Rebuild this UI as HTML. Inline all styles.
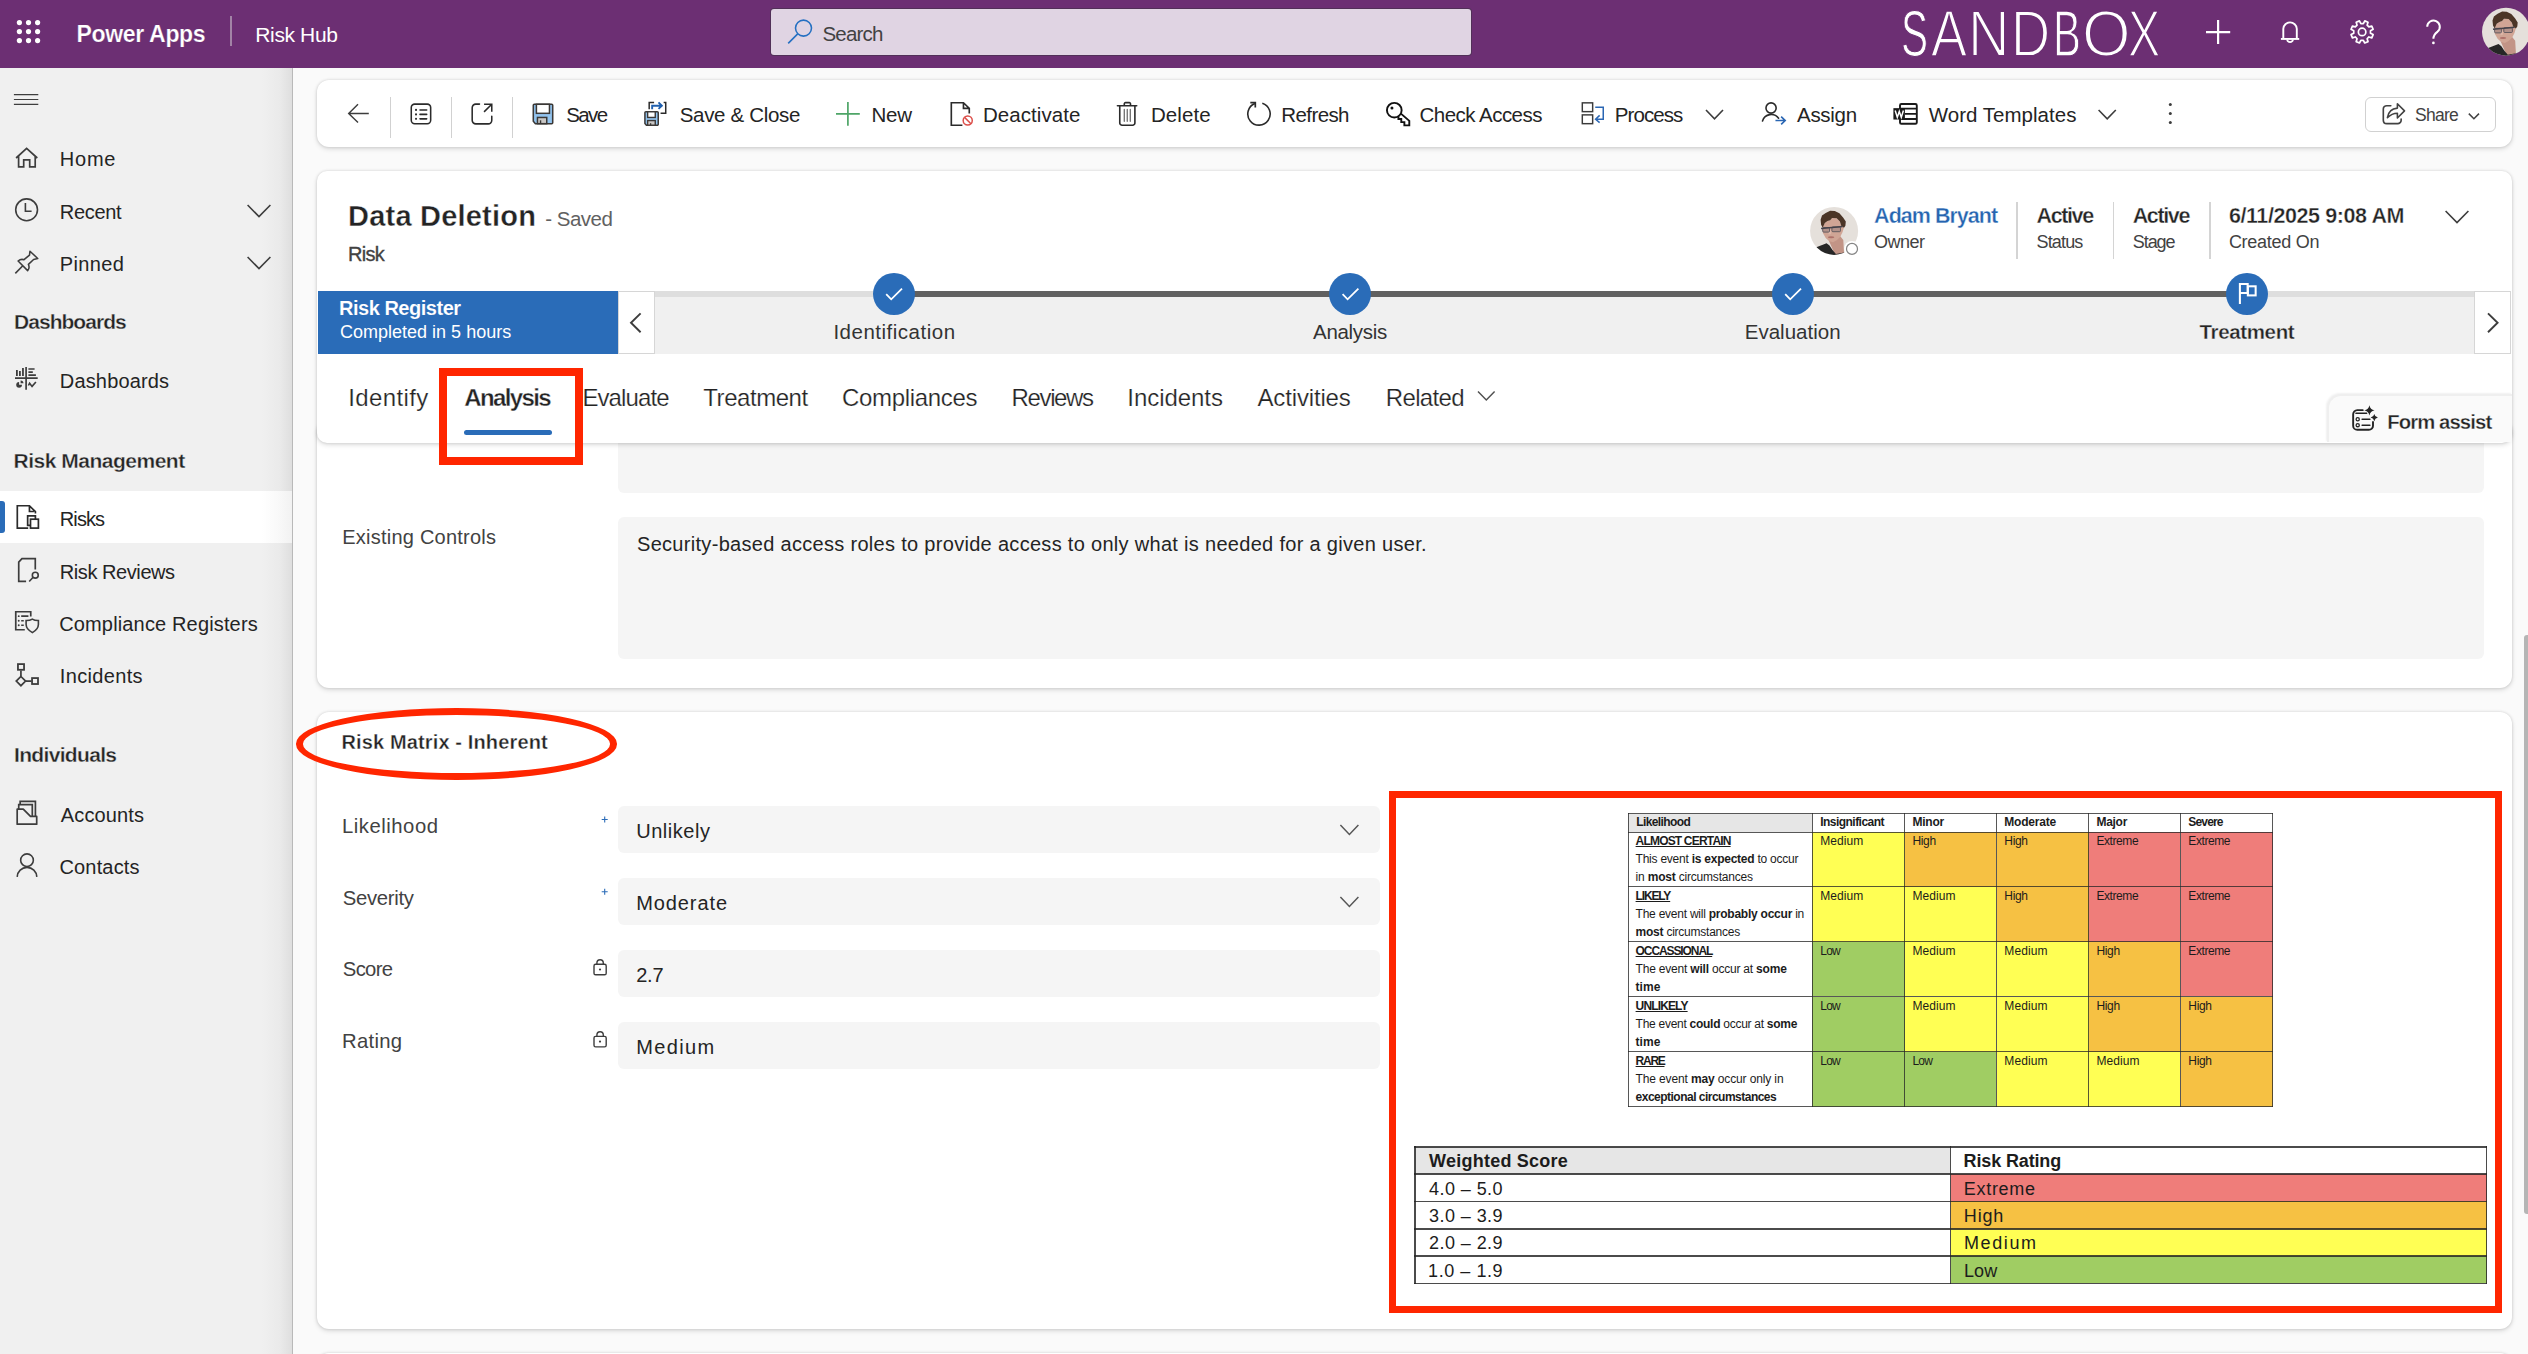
<!DOCTYPE html>
<html><head><meta charset="utf-8"><title>Risk: Data Deletion - Power Apps</title>
<style>
*{box-sizing:border-box;margin:0;padding:0}
html,body{width:2528px;height:1354px;overflow:hidden;background:#fafafa;font-family:"Liberation Sans",sans-serif}
#r{position:absolute;left:0;top:0;width:2528px;height:1354px;overflow:hidden;background:#fafafa}
.a{position:absolute}
.t{position:absolute;white-space:pre;line-height:0}
.card{position:absolute;background:#fff;border-radius:12px;box-shadow:0 0 3px rgba(0,0,0,.14),0 2px 5px rgba(0,0,0,.13)}
.fld{position:absolute;background:#f5f5f5;border-radius:6px}
svg{position:absolute;overflow:visible}
</style></head><body><div id="r">
<div class="card" style="left:317px;top:420px;width:2195px;height:268px"></div>
<div class="card" style="left:317px;top:712px;width:2195px;height:617px"></div>
<div class="card" style="left:317px;top:1353px;width:2195px;height:100px"></div>
<div class="fld" style="left:618px;top:430px;width:1866px;height:62.5px"></div>
<div class="fld" style="left:618px;top:517px;width:1866px;height:142.3px"></div>
<div class="fld" style="left:618px;top:806px;width:762px;height:46.89999999999998px"></div>
<div class="fld" style="left:618px;top:878.2px;width:762px;height:46.89999999999998px"></div>
<div class="fld" style="left:618px;top:950.1px;width:762px;height:47.299999999999955px"></div>
<div class="fld" style="left:618px;top:1022px;width:762px;height:47.40000000000009px"></div>
<div class="card" style="left:317px;top:171px;width:2195px;height:271.5px;border-radius:10px"></div>
<div class="a" style="left:2326.8px;top:394.2px;width:185px;height:48.2px;background:#fafafa;border-top-left-radius:14px;border:2.2px solid #efefef;border-right:none;border-bottom:none;box-shadow:-1px -1px 2px rgba(0,0,0,.06)"></div>
<div class="a" style="left:654px;top:291.3px;width:1821px;height:62.4px;background:#f0f0f0"></div>
<div class="a" style="left:654px;top:291.3px;width:1821px;height:5.8px;background:#dedede"></div>
<div class="a" style="left:893px;top:291.3px;width:1354px;height:5.8px;background:#616161"></div>
<div class="a" style="left:318.2px;top:291.3px;width:300px;height:62.3px;background:#2a6cb8"></div>
<div class="a" style="left:618px;top:291.3px;width:36.5px;height:62.3px;background:#fff;border:1px solid #d6d6d6"></div>
<div class="a" style="left:2474.3px;top:291.3px;width:36.5px;height:62.3px;background:#fff;border:1px solid #d6d6d6"></div>
<div class="a" style="left:872.8499999999999px;top:273.05px;width:41.9px;height:41.9px;border-radius:50%;background:#2a6cb8"></div>
<div class="a" style="left:1329.25px;top:273.05px;width:41.9px;height:41.9px;border-radius:50%;background:#2a6cb8"></div>
<div class="a" style="left:1771.85px;top:273.05px;width:41.9px;height:41.9px;border-radius:50%;background:#2a6cb8"></div>
<div class="a" style="left:2226.1000000000004px;top:273.05px;width:41.9px;height:41.9px;border-radius:50%;background:#2a6cb8"></div>
<div class="a" style="left:2016.4px;top:202px;width:1.6px;height:57px;background:#d4d4d4"></div>
<div class="a" style="left:2112.9px;top:202px;width:1.6px;height:57px;background:#d4d4d4"></div>
<div class="a" style="left:2209px;top:202px;width:1.6px;height:57px;background:#d4d4d4"></div>
<div class="a" style="left:464.3px;top:429.8px;width:87.5px;height:5.5px;border-radius:3px;background:#2a6cb8"></div>
<div class="card" style="left:317px;top:80px;width:2195px;height:67px"></div>
<div class="a" style="left:390px;top:96.5px;width:1.3px;height:41px;background:#d1d1d1"></div>
<div class="a" style="left:451px;top:96.5px;width:1.3px;height:41px;background:#d1d1d1"></div>
<div class="a" style="left:512px;top:96.5px;width:1.3px;height:41px;background:#d1d1d1"></div>
<div class="a" style="left:2365.3px;top:97px;width:130.4px;height:34.8px;border:1.3px solid #d1d1d1;border-radius:6px;background:#fff"></div>
<div class="a" style="left:0;top:68px;width:292.5px;height:1286px;background:linear-gradient(90deg,#f0f0f0 0,#f0f0f0 262px,#eaeaea 280px,#dfdfdf 291.5px);border-right:1.3px solid #b9b9b9"></div>
<div class="a" style="left:0;top:491px;width:291.5px;height:51.7px;background:linear-gradient(90deg,#fff 0,#fff 262px,#f9f9f9 278px,#f2f2f2 291.5px)"></div>
<div class="a" style="left:0;top:501px;width:4.6px;height:32px;background:#2a6cb8;border-radius:0 3px 3px 0"></div>
<div class="a" style="left:0;top:0;width:2528px;height:68px;background:#6c2f73"></div>
<div class="a" style="left:230.3px;top:16px;width:1.5px;height:30px;background:#a283a6"></div>
<div class="a" style="left:771.1px;top:8.9px;width:700px;height:46px;background:#e0d4e3;border-radius:3px;box-shadow:0 0 0 1px rgba(60,50,65,.55)"></div>
<div class="a" style="left:2524px;top:634.9px;width:6px;height:578.8px;background:#b5b5b5;border-radius:3.5px"></div>
<div class="a" style="left:1628.4px;top:813.6px;width:644.2999999999997px;height:292.9px;background:#fff"></div>
<div class="a" style="left:1628.4px;top:813.6px;width:184.0px;height:18.600000000000023px;background:#e6e6e6"></div>
<div class="a" style="left:1812.4px;top:832.2px;width:92.19999999999982px;height:54.69999999999993px;background:#ffff54"></div>
<div class="a" style="left:1904.6px;top:832.2px;width:91.90000000000009px;height:54.69999999999993px;background:#f6c143"></div>
<div class="a" style="left:1996.5px;top:832.2px;width:92.09999999999991px;height:54.69999999999993px;background:#f6c143"></div>
<div class="a" style="left:2088.6px;top:832.2px;width:91.90000000000009px;height:54.69999999999993px;background:#ef7d7a"></div>
<div class="a" style="left:2180.5px;top:832.2px;width:92.19999999999982px;height:54.69999999999993px;background:#ef7d7a"></div>
<div class="a" style="left:1812.4px;top:886.9px;width:92.19999999999982px;height:54.700000000000045px;background:#ffff54"></div>
<div class="a" style="left:1904.6px;top:886.9px;width:91.90000000000009px;height:54.700000000000045px;background:#ffff54"></div>
<div class="a" style="left:1996.5px;top:886.9px;width:92.09999999999991px;height:54.700000000000045px;background:#f6c143"></div>
<div class="a" style="left:2088.6px;top:886.9px;width:91.90000000000009px;height:54.700000000000045px;background:#ef7d7a"></div>
<div class="a" style="left:2180.5px;top:886.9px;width:92.19999999999982px;height:54.700000000000045px;background:#ef7d7a"></div>
<div class="a" style="left:1812.4px;top:941.6px;width:92.19999999999982px;height:54.89999999999998px;background:#a0cd63"></div>
<div class="a" style="left:1904.6px;top:941.6px;width:91.90000000000009px;height:54.89999999999998px;background:#ffff54"></div>
<div class="a" style="left:1996.5px;top:941.6px;width:92.09999999999991px;height:54.89999999999998px;background:#ffff54"></div>
<div class="a" style="left:2088.6px;top:941.6px;width:91.90000000000009px;height:54.89999999999998px;background:#f6c143"></div>
<div class="a" style="left:2180.5px;top:941.6px;width:92.19999999999982px;height:54.89999999999998px;background:#ef7d7a"></div>
<div class="a" style="left:1812.4px;top:996.5px;width:92.19999999999982px;height:55.0px;background:#a0cd63"></div>
<div class="a" style="left:1904.6px;top:996.5px;width:91.90000000000009px;height:55.0px;background:#ffff54"></div>
<div class="a" style="left:1996.5px;top:996.5px;width:92.09999999999991px;height:55.0px;background:#ffff54"></div>
<div class="a" style="left:2088.6px;top:996.5px;width:91.90000000000009px;height:55.0px;background:#f6c143"></div>
<div class="a" style="left:2180.5px;top:996.5px;width:92.19999999999982px;height:55.0px;background:#f6c143"></div>
<div class="a" style="left:1812.4px;top:1051.5px;width:92.19999999999982px;height:55.0px;background:#a0cd63"></div>
<div class="a" style="left:1904.6px;top:1051.5px;width:91.90000000000009px;height:55.0px;background:#a0cd63"></div>
<div class="a" style="left:1996.5px;top:1051.5px;width:92.09999999999991px;height:55.0px;background:#ffff54"></div>
<div class="a" style="left:2088.6px;top:1051.5px;width:91.90000000000009px;height:55.0px;background:#ffff54"></div>
<div class="a" style="left:2180.5px;top:1051.5px;width:92.19999999999982px;height:55.0px;background:#f6c143"></div>
<div class="a" style="left:1627.8000000000002px;top:813.0px;width:1.2px;height:294.09999999999997px;background:rgba(40,40,40,.78)"></div>
<div class="a" style="left:1811.8000000000002px;top:813.0px;width:1.2px;height:294.09999999999997px;background:rgba(40,40,40,.78)"></div>
<div class="a" style="left:1904.0px;top:813.0px;width:1.2px;height:294.09999999999997px;background:rgba(40,40,40,.78)"></div>
<div class="a" style="left:1995.9px;top:813.0px;width:1.2px;height:294.09999999999997px;background:rgba(40,40,40,.78)"></div>
<div class="a" style="left:2088.0px;top:813.0px;width:1.2px;height:294.09999999999997px;background:rgba(40,40,40,.78)"></div>
<div class="a" style="left:2179.9px;top:813.0px;width:1.2px;height:294.09999999999997px;background:rgba(40,40,40,.78)"></div>
<div class="a" style="left:2272.1px;top:813.0px;width:1.2px;height:294.09999999999997px;background:rgba(40,40,40,.78)"></div>
<div class="a" style="left:1627.8000000000002px;top:813.0px;width:645.4999999999998px;height:1.2px;background:rgba(40,40,40,.78)"></div>
<div class="a" style="left:1627.8000000000002px;top:831.6px;width:645.4999999999998px;height:1.2px;background:rgba(40,40,40,.78)"></div>
<div class="a" style="left:1627.8000000000002px;top:886.3px;width:645.4999999999998px;height:1.2px;background:rgba(40,40,40,.78)"></div>
<div class="a" style="left:1627.8000000000002px;top:941.0px;width:645.4999999999998px;height:1.2px;background:rgba(40,40,40,.78)"></div>
<div class="a" style="left:1627.8000000000002px;top:995.9px;width:645.4999999999998px;height:1.2px;background:rgba(40,40,40,.78)"></div>
<div class="a" style="left:1627.8000000000002px;top:1050.9px;width:645.4999999999998px;height:1.2px;background:rgba(40,40,40,.78)"></div>
<div class="a" style="left:1627.8000000000002px;top:1105.9px;width:645.4999999999998px;height:1.2px;background:rgba(40,40,40,.78)"></div>
<div class="a" style="left:1415.2px;top:1146.9px;width:1071.4999999999998px;height:136.5999999999999px;background:#fff"></div>
<div class="a" style="left:1415.2px;top:1146.9px;width:535.3px;height:27.09999999999991px;background:#e6e6e6"></div>
<div class="a" style="left:1950.5px;top:1174px;width:536.1999999999998px;height:27.40000000000009px;background:#ef7d7a"></div>
<div class="a" style="left:1950.5px;top:1201.4px;width:536.1999999999998px;height:27.399999999999864px;background:#f6c143"></div>
<div class="a" style="left:1950.5px;top:1228.8px;width:536.1999999999998px;height:27.40000000000009px;background:#ffff54"></div>
<div class="a" style="left:1950.5px;top:1256.2px;width:536.1999999999998px;height:27.299999999999955px;background:#a0cd63"></div>
<div class="a" style="left:1414.4px;top:1146.1000000000001px;width:1.6px;height:138.1999999999999px;background:rgba(35,35,35,.82)"></div>
<div class="a" style="left:1949.7px;top:1146.1000000000001px;width:1.6px;height:138.1999999999999px;background:rgba(35,35,35,.82)"></div>
<div class="a" style="left:2485.8999999999996px;top:1146.1000000000001px;width:1.6px;height:138.1999999999999px;background:rgba(35,35,35,.82)"></div>
<div class="a" style="left:1414.4px;top:1146.1000000000001px;width:1073.0999999999997px;height:1.6px;background:rgba(35,35,35,.82)"></div>
<div class="a" style="left:1414.4px;top:1173.2px;width:1073.0999999999997px;height:1.6px;background:rgba(35,35,35,.82)"></div>
<div class="a" style="left:1414.4px;top:1200.6000000000001px;width:1073.0999999999997px;height:1.6px;background:rgba(35,35,35,.82)"></div>
<div class="a" style="left:1414.4px;top:1228.0px;width:1073.0999999999997px;height:1.6px;background:rgba(35,35,35,.82)"></div>
<div class="a" style="left:1414.4px;top:1255.4px;width:1073.0999999999997px;height:1.6px;background:rgba(35,35,35,.82)"></div>
<div class="a" style="left:1414.4px;top:1282.7px;width:1073.0999999999997px;height:1.6px;background:rgba(35,35,35,.82)"></div>
<svg width="2528" height="1354" viewBox="0 0 2528 1354" style="left:0;top:0">
<defs><clipPath id="cav"><circle cx="24" cy="24" r="24"/></clipPath><filter id="bl" x="-10%" y="-10%" width="120%" height="120%"><feGaussianBlur stdDeviation="0.55"/></filter></defs>
<g transform="translate(2482 7.7)"><g clip-path="url(#cav)"><rect x="-1" y="-1" width="50" height="50" fill="#e5e0db"/><g filter="url(#bl)"><path d="M18.6 33.6 L22 41.2 L24.7 47.5 L34 47.5 L33.2 33 L30.2 29.4Z" fill="#c29486"/><path d="M3 41.5 L16.5 36.4 L19.4 38.5 L22.2 42.8 L25.8 47 L34 45.6 L36 49 L4 49Z" fill="#262627"/><path d="M12.4 20.6 L12.8 26.1 L15.6 31.1 L19.2 34.3 L22.9 35.3 L26.6 33.4 L30.2 29.8 L32.5 25.2 L33.9 20.6 L31.1 18.8 L29.8 14.7 L26.6 11.4 L22 11 L20.1 13.3 L17.4 14.2 L14.7 16Z" fill="#d0a595"/><ellipse cx="21" cy="30.3" rx="3.2" ry="1" fill="#ad6f68"/><ellipse cx="19.6" cy="25" rx="1.6" ry="2.6" fill="#dcb5a6"/><path d="M10.5 12.8 L11.9 8.7 L15.6 6 L20.1 3.9 L24.7 4.1 L29.3 6.4 L33 10.5 L35.7 14.7 L35.3 18.8 L33.9 20.9 L31.1 18.8 L29.8 14.7 L26.6 11.4 L22 11 L20.1 13.3 L17.4 14.2 L14.7 16 L12.6 20.8 L11 17.9Z" fill="#4b3527"/><rect x="12.6" y="20.6" width="6.8" height="4.6" rx="1" fill="rgba(110,100,110,.3)" stroke="#55525a" stroke-width="0.85"/><rect x="21.8" y="20" width="8.6" height="4.8" rx="1" fill="rgba(110,100,110,.3)" stroke="#55525a" stroke-width="0.85"/><path d="M11 21.6 L32.6 19.6" stroke="#45424a" stroke-width="1.5"/></g></g></g>
<g transform="translate(1810.1 206.9)"><g clip-path="url(#cav)"><rect x="-1" y="-1" width="50" height="50" fill="#e5e0db"/><g filter="url(#bl)"><path d="M18.6 33.6 L22 41.2 L24.7 47.5 L34 47.5 L33.2 33 L30.2 29.4Z" fill="#c29486"/><path d="M3 41.5 L16.5 36.4 L19.4 38.5 L22.2 42.8 L25.8 47 L34 45.6 L36 49 L4 49Z" fill="#262627"/><path d="M12.4 20.6 L12.8 26.1 L15.6 31.1 L19.2 34.3 L22.9 35.3 L26.6 33.4 L30.2 29.8 L32.5 25.2 L33.9 20.6 L31.1 18.8 L29.8 14.7 L26.6 11.4 L22 11 L20.1 13.3 L17.4 14.2 L14.7 16Z" fill="#d0a595"/><ellipse cx="21" cy="30.3" rx="3.2" ry="1" fill="#ad6f68"/><ellipse cx="19.6" cy="25" rx="1.6" ry="2.6" fill="#dcb5a6"/><path d="M10.5 12.8 L11.9 8.7 L15.6 6 L20.1 3.9 L24.7 4.1 L29.3 6.4 L33 10.5 L35.7 14.7 L35.3 18.8 L33.9 20.9 L31.1 18.8 L29.8 14.7 L26.6 11.4 L22 11 L20.1 13.3 L17.4 14.2 L14.7 16 L12.6 20.8 L11 17.9Z" fill="#4b3527"/><rect x="12.6" y="20.6" width="6.8" height="4.6" rx="1" fill="rgba(110,100,110,.3)" stroke="#55525a" stroke-width="0.85"/><rect x="21.8" y="20" width="8.6" height="4.8" rx="1" fill="rgba(110,100,110,.3)" stroke="#55525a" stroke-width="0.85"/><path d="M11 21.6 L32.6 19.6" stroke="#45424a" stroke-width="1.5"/></g></g></g>
<circle cx="1852" cy="248.9" r="7.9" fill="#fff"/><circle cx="1852" cy="248.9" r="5.5" fill="#fff" stroke="#858585" stroke-width="1.25"/>
</svg>
<svg width="2528" height="1354" viewBox="0 0 2528 1354" style="left:0;top:0" fill="none" stroke-linecap="butt"><circle cx="19.4" cy="22.6" r="2.6" stroke="none" stroke-width="0" fill="#fff"/>
<circle cx="19.4" cy="31.6" r="2.6" stroke="none" stroke-width="0" fill="#fff"/>
<circle cx="19.4" cy="40.6" r="2.6" stroke="none" stroke-width="0" fill="#fff"/>
<circle cx="28.5" cy="22.6" r="2.6" stroke="none" stroke-width="0" fill="#fff"/>
<circle cx="28.5" cy="31.6" r="2.6" stroke="none" stroke-width="0" fill="#fff"/>
<circle cx="28.5" cy="40.6" r="2.6" stroke="none" stroke-width="0" fill="#fff"/>
<circle cx="37.6" cy="22.6" r="2.6" stroke="none" stroke-width="0" fill="#fff"/>
<circle cx="37.6" cy="31.6" r="2.6" stroke="none" stroke-width="0" fill="#fff"/>
<circle cx="37.6" cy="40.6" r="2.6" stroke="none" stroke-width="0" fill="#fff"/>
<circle cx="803.5" cy="28.1" r="8.0" stroke="#2570c2" stroke-width="1.55" fill="none"/>
<path d="M797.7 33.9 L788.2 43.4" stroke="#2570c2" stroke-width="1.55" fill="none" />
<path d="M2206 32.1 H2230.2 M2218.1 20.1 V44.1" stroke="#fff" stroke-width="2.2" fill="none" />
<path d="M2280.9 38.95 H2299.2" stroke="#fff" stroke-width="1.9" fill="none" />
<path d="M2283.3 38.9 V28.8 A6.76 6.76 0 0 1 2296.8 28.8 V38.9" stroke="#fff" stroke-width="1.9" fill="none" />
<path d="M2287.1 39.6 A3 3 0 0 0 2293 39.6" stroke="#fff" stroke-width="1.7" fill="none" />
<path d="M2363.36 23.59 L2364.75 20.91 L2368.03 22.27 L2367.12 25.15 L2368.90 26.93 L2371.78 26.02 L2373.14 29.30 L2370.46 30.69 L2370.46 33.21 L2373.14 34.60 L2371.78 37.88 L2368.90 36.97 L2367.12 38.75 L2368.03 41.63 L2364.75 42.99 L2363.36 40.31 L2360.84 40.31 L2359.45 42.99 L2356.17 41.63 L2357.08 38.75 L2355.30 36.97 L2352.42 37.88 L2351.06 34.60 L2353.74 33.21 L2353.74 30.69 L2351.06 29.30 L2352.42 26.02 L2355.30 26.93 L2357.08 25.15 L2356.17 22.27 L2359.45 20.91 L2360.84 23.59Z" stroke="#fff" stroke-width="1.7" fill="none" stroke-linejoin="round"/>
<circle cx="2362.1" cy="31.95" r="3.75" stroke="#fff" stroke-width="1.7" fill="none"/>
<path d="M2427.2 26.8 A6.3 6.3 0 1 1 2437.6 31.6 C2434.8 33.8 2433.4 35.2 2433.4 38.8" stroke="#fff" stroke-width="2" fill="none" />
<circle cx="2433.4" cy="42.9" r="1.35" stroke="none" stroke-width="0" fill="#fff"/>
<path d="M13.9 94.6 H38.3 M13.9 99.5 H38.3 M13.9 104.4 H38.3" stroke="#3d3d3d" stroke-width="1.1" fill="none" />
<path d="M16.1 158 L26.6 148.4 L37.3 158 M18.6 156 V166.8 H23.7 V159.9 H29.7 V166.8 H35.2 V156" stroke="#3d3d3d" stroke-width="1.7" fill="none" stroke-linejoin="miter"/>
<circle cx="26.6" cy="209.8" r="10.9" stroke="#3d3d3d" stroke-width="1.6" fill="none"/>
<path d="M25.4 203 V211.2 H31.6" stroke="#3d3d3d" stroke-width="1.6" fill="none" />
<path d="M247.6 205 L259.0 216.6 L270.4 205" stroke="#3d3d3d" stroke-width="1.6" fill="none" />
<path d="M247.6 257 L259.0 268.6 L270.4 257" stroke="#3d3d3d" stroke-width="1.6" fill="none" />
<path d="M22.8 265.7 L15.3 273.4" stroke="#3d3d3d" stroke-width="1.55" fill="none" />
<path d="M29.98 251.2 L37.73 258.45 L33.6 259.5 L28.4 264.4 C29.5 267 29.3 269 27.65 270.6 L18.1 261 C20 259.3 22 259 24 259.7 L29.5 255.1 Z" stroke="#3d3d3d" stroke-width="1.55" fill="none" stroke-linejoin="round"/>
<path d="M15 378.1 H37.7 M26.1 367 V389.7" stroke="#3d3d3d" stroke-width="1.7" fill="none" />
<path d="M16.9 370.1 V375.9 M19.9 371.1 V375.9 M22.95 368 V375.9" stroke="#3d3d3d" stroke-width="1.8" fill="none" />
<path d="M28.4 369.05 H34.6 M28.4 372.1 H32.8 M28.4 375.1 H35.9" stroke="#3d3d3d" stroke-width="1.6" fill="none" />
<path d="M19.1 381.9 A2.9 2.9 0 1 0 22 384.8 H19.1 Z" fill="#3d3d3d"/>
<path d="M20.6 380.4 A2.9 2.9 0 0 1 23.5 383.3 H20.6 Z" fill="#3d3d3d"/>
<path d="M28.4 385.5 L29.6 383.2 L32.05 386.4 L35.9 382" stroke="#3d3d3d" stroke-width="1.6" fill="none" />
<path d="M28.2 528.1 H17.3 V505.75 H29.45 L35.4 511.7 V513.6 M29.45 505.9 V511.5 H33.9" stroke="#2b2b2b" stroke-width="1.7" fill="none" />
<path d="M30.5 525.4 H27.65 V515.85 H35.4 V519" stroke="#2b2b2b" stroke-width="1.7" fill="none" />
<rect x="30.5" y="519.2" width="7.9" height="8.9" rx="0" stroke="#2b2b2b" stroke-width="1.7" fill="none"/>
<path d="M26.1 581.35 H18.73 V562.1 L21.96 558.6 H35.28 V569.6" stroke="#3d3d3d" stroke-width="1.7" fill="none" />
<circle cx="35.28" cy="575.14" r="2.95" stroke="#3d3d3d" stroke-width="1.6" fill="none"/>
<path d="M33.1 577.3 L29.2 581.5" stroke="#3d3d3d" stroke-width="1.6" fill="none" />
<path d="M24.8 629.73 H15.76 V611.76 H30.75 V616.4" stroke="#3d3d3d" stroke-width="1.7" fill="none" />
<path d="M21.19 616.15 H28.43 M21.19 620.68 H23.77 M21.19 625.2 H23.77" stroke="#3d3d3d" stroke-width="1.6" fill="none" />
<circle cx="18.73" cy="616.15" r="0.95" stroke="none" stroke-width="0" fill="#3d3d3d"/>
<circle cx="18.73" cy="620.68" r="0.95" stroke="none" stroke-width="0" fill="#3d3d3d"/>
<circle cx="18.73" cy="625.2" r="0.95" stroke="none" stroke-width="0" fill="#3d3d3d"/>
<path d="M32.3 619.1 C30.2 620.4 28.4 620.6 26.1 620.55 V624.6 C26.2 628.4 29.4 631 32.4 632.6 C35.4 631 38.3 628.4 38.4 624.6 V620.55 C36.1 620.6 34.4 620.4 32.3 619.1Z" stroke="#3d3d3d" stroke-width="1.6" fill="none" />
<rect x="17.95" y="664.1" width="6.1" height="5.7" rx="0" stroke="#3d3d3d" stroke-width="1.8" fill="none"/>
<path d="M20.93 670.4 V676.4 M25.6 681.05 H31.5" stroke="#3d3d3d" stroke-width="1.7" fill="none" />
<path d="M20.93 676.5 L25.6 681.05 L20.93 685.7 L16.26 681.05Z" stroke="#3d3d3d" stroke-width="1.7" fill="none" />
<rect x="32.05" y="678.07" width="5.95" height="5.95" rx="0" stroke="#3d3d3d" stroke-width="1.8" fill="none"/>
<path d="M17.18 809.22 H23.26 L30.5 816.46 H36.7 V824.22 H17.18Z" stroke="#3d3d3d" stroke-width="1.7" fill="none" stroke-linejoin="round"/>
<path d="M18.73 809 V804.7 H32.3 V816.3" stroke="#3d3d3d" stroke-width="1.7" fill="none" />
<path d="M20.15 804.5 V801.46 H35.41 V816.3" stroke="#3d3d3d" stroke-width="1.7" fill="none" />
<circle cx="27" cy="860.2" r="6.35" stroke="#3d3d3d" stroke-width="1.6" fill="none"/>
<path d="M17.18 876.9 A9.83 9.83 0 0 1 36.83 876.9" stroke="#3d3d3d" stroke-width="1.6" fill="none" />
<path d="M368.8 113.45 H349 M358 104.3 L348.7 113.45 L358 122.6" stroke="#3d3d3d" stroke-width="1.45" fill="none" />
<rect x="411.27" y="104.11" width="19.4" height="19.6" rx="3.4" stroke="#2b2b2b" stroke-width="1.55" fill="none"/>
<path d="M420 109.92 H426.7 M420 114.39 H426.7 M420 118.86 H426.7" stroke="#2b2b2b" stroke-width="1.55" fill="none" stroke-linecap="round"/>
<circle cx="416.02" cy="109.92" r="1.05" stroke="none" stroke-width="0" fill="#2b2b2b"/>
<circle cx="416.02" cy="114.39" r="1.05" stroke="none" stroke-width="0" fill="#2b2b2b"/>
<circle cx="416.02" cy="118.86" r="1.05" stroke="none" stroke-width="0" fill="#2b2b2b"/>
<path d="M479.5 104.11 H475.8 A3.6 3.6 0 0 0 472.19 107.7 V120.3 A3.6 3.6 0 0 0 475.8 123.89 H488.2 A3.6 3.6 0 0 0 491.77 120.3 V116.2" stroke="#2b2b2b" stroke-width="1.55" fill="none" stroke-linecap="round"/>
<path d="M484.06 104.3 H491.77 V111.82 M491.5 104.55 L484.06 111.9" stroke="#2b2b2b" stroke-width="1.55" fill="none" />
<path d="M534.3 104.27 H551.7 A1 1 0 0 1 552.7 105.27 V122.67 A1 1 0 0 1 551.7 123.67 H535.4 L533.3 121.3 V105.27 A1 1 0 0 1 534.3 104.27Z" stroke="#3b3836" stroke-width="1.55" fill="#93c4ef" stroke-linejoin="round"/>
<rect x="536.4" y="104.27" width="13.07" height="9.05" rx="0" stroke="#3b3836" stroke-width="1.5" fill="#fff"/>
<rect x="537.45" y="117.46" width="9.3" height="6.21" rx="0" stroke="#3b3836" stroke-width="1.5" fill="#c9c7c5"/>
<path d="M540.55 120.3 V123.6" stroke="#3b3836" stroke-width="1.4" fill="none" />
<path d="M645.9 111.77 H657.2 A1 1 0 0 1 658.24 112.8 V124.2 A1 1 0 0 1 657.2 125.22 H646.4 L644.92 123.6 V112.8 A1 1 0 0 1 645.9 111.77Z" stroke="#3b3836" stroke-width="1.5" fill="#93c4ef" stroke-linejoin="round"/>
<rect x="647.64" y="111.77" width="7.62" height="5.69" rx="0" stroke="#3b3836" stroke-width="1.4" fill="#fff"/>
<rect x="647.64" y="120.56" width="7.62" height="4.66" rx="0" stroke="#3b3836" stroke-width="1.4" fill="#c9c7c5"/>
<path d="M650.6 123.2 V125" stroke="#3b3836" stroke-width="1.3" fill="none" />
<path d="M649.19 109.2 V102.59 H654.1 M663.67 102.59 H665.73 V113.19 H660.56" stroke="#2b2b2b" stroke-width="1.5" fill="none" />
<path d="M652.16 109.2 V105.7 H661.6 M658.5 102.4 L661.86 105.7 L658.5 108.9" stroke="#1f5fae" stroke-width="1.9" fill="none" />
<path d="M836 113.9 H859.8 M847.9 102 V125.8" stroke="#4ea567" stroke-width="1.7" fill="none" />
<path d="M962.4 125.22 H951.31 V102.72 H963.46 L969.28 108.41 V113.6 M963.46 102.9 V108.41 H968.9" stroke="#2b2b2b" stroke-width="1.65" fill="none" />
<circle cx="967.73" cy="120.56" r="4.55" stroke="#dc4f4a" stroke-width="1.5" fill="none"/>
<path d="M964.6 117.4 L970.9 123.7" stroke="#dc4f4a" stroke-width="1.5" fill="none" />
<path d="M1117.44 105.7 H1136.7" stroke="#2b2b2b" stroke-width="1.6" fill="none" stroke-linecap="round"/>
<path d="M1124.29 105.5 V103.8 A1.2 1.2 0 0 1 1125.5 102.59 H1129.3 A1.2 1.2 0 0 1 1130.5 103.8 V105.5" stroke="#2b2b2b" stroke-width="1.6" fill="none" />
<path d="M1119.76 105.9 V122.9 A2.3 2.3 0 0 0 1122.1 125.22 H1132.6 A2.3 2.3 0 0 0 1134.89 122.9 V105.9" stroke="#2b2b2b" stroke-width="1.6" fill="none" />
<path d="M1124.29 109.45 V121.34 M1127.26 109.45 V121.34 M1130.29 109.45 V121.34" stroke="#6e6e6e" stroke-width="1.3" fill="none" stroke-linecap="round"/>
<path d="M1254.9 103.55 A11.18 11.18 0 1 0 1262.3 103.28" stroke="#2b2b2b" stroke-width="1.6" fill="none" />
<path d="M1250.3 102.6 H1255.3 V107.6" stroke="#2b2b2b" stroke-width="1.7" fill="none" />
<circle cx="1394.29" cy="110.22" r="7.35" stroke="#111" stroke-width="1.9" fill="none"/>
<circle cx="1391.96" cy="107.89" r="1.5" stroke="none" stroke-width="0" fill="#111"/>
<path d="M1400.9 113.6 L1409.29 120.9 V125.35 H1404.37 V122.12 H1401.27 V119.01 H1398.43 V116.3" stroke="#111" stroke-width="1.9" fill="none" stroke-linejoin="miter"/>
<rect x="1582.31" y="102.85" width="10.34" height="8.79" rx="0" stroke="#3a3a3a" stroke-width="1.45" fill="none"/>
<rect x="1582.31" y="114.88" width="10.34" height="8.79" rx="0" stroke="#3a3a3a" stroke-width="1.45" fill="none"/>
<path d="M1595.24 107.25 H1603.25 V119.27 H1596 M1599.63 115.39 L1595.6 119.27 L1599.63 122.63" stroke="#2a66b3" stroke-width="1.5" fill="none" />
<path d="M1706 110 L1714.5 118.8 L1723 110" stroke="#3d3d3d" stroke-width="1.6" fill="none" />
<circle cx="1771.07" cy="108.02" r="5.1" stroke="#2b2b2b" stroke-width="1.6" fill="none"/>
<path d="M1762.5 120.9 A9.2 9.2 0 0 1 1778.6 118.2" stroke="#2b2b2b" stroke-width="1.6" fill="none" stroke-linecap="round"/>
<path d="M1775.46 120.56 H1785 M1781.15 116.69 L1785.2 120.56 L1781.15 124.44" stroke="#2a66b3" stroke-width="1.6" fill="none" />
<rect x="1900" y="104.02" width="16.8" height="19.78" rx="1.4" stroke="#1a1a1a" stroke-width="1.9" fill="none"/>
<path d="M1900 108.67 H1916.8 M1904.9 113.84 H1916.8 M1900 119.01 H1916.8" stroke="#1a1a1a" stroke-width="1.8" fill="none" />
<rect x="1893.4" y="108.15" width="11.5" height="11.38" rx="0" stroke="none" stroke-width="0" fill="#1a1a1a"/>
<path d="M1895.2 110.5 L1897.3 117.4 L1899.3 111.4 L1901.3 117.4 L1903.4 110.5" stroke="#fff" stroke-width="1.5" fill="none" stroke-linejoin="miter"/>
<path d="M2098.6 110 L2107.2 118.8 L2115.8 110" stroke="#3d3d3d" stroke-width="1.6" fill="none" />
<circle cx="2170.3" cy="104.6" r="1.5" stroke="none" stroke-width="0" fill="#3d3d3d"/>
<circle cx="2170.3" cy="113.6" r="1.5" stroke="none" stroke-width="0" fill="#3d3d3d"/>
<circle cx="2170.3" cy="122.6" r="1.5" stroke="none" stroke-width="0" fill="#3d3d3d"/>
<path d="M2390.81 105.7 H2386.7 A3.4 3.4 0 0 0 2383.31 109.1 V120.3 A3.4 3.4 0 0 0 2386.7 123.67 H2397.7 A3.4 3.4 0 0 0 2401.15 120.3 V119" stroke="#424242" stroke-width="1.65" fill="none" stroke-linecap="round"/>
<path d="M2397.4 103.8 L2404.5 110.9 L2397.4 118 V113.3 C2393.4 113.4 2390.2 115 2387.4 117.7 C2388.2 112.2 2391.6 108.6 2397.4 108.1Z" stroke="#424242" stroke-width="1.6" fill="none" stroke-linejoin="round"/>
<path d="M2468.8 113.6 L2473.9 118.8 L2479 113.6" stroke="#424242" stroke-width="1.5" fill="none" />
<path d="M2445.6 211 L2457.0 222.6 L2468.4 211" stroke="#3d3d3d" stroke-width="1.6" fill="none" />
<path d="M640.6 313.4 L631 322.8 L640.6 332.2" stroke="#3d3d3d" stroke-width="1.9" fill="none" />
<path d="M2488 313.4 L2497.6 322.8 L2488 332.2" stroke="#3d3d3d" stroke-width="1.9" fill="none" />
<path d="M886.1999999999999 294.2 L891.1999999999999 299.3 L902.0 288.6" stroke="#fff" stroke-width="1.8" fill="none" />
<path d="M1342.6000000000001 294.2 L1347.6000000000001 299.3 L1358.4 288.6" stroke="#fff" stroke-width="1.8" fill="none" />
<path d="M1785.2 294.2 L1790.2 299.3 L1801.0 288.6" stroke="#fff" stroke-width="1.8" fill="none" />
<path d="M2239.9 303.9 V284 H2247.7 V293.05 H2239.9" stroke="#fff" stroke-width="2.05" fill="none" />
<rect x="2247.85" y="286.3" width="7.8" height="9.1" rx="0" stroke="#fff" stroke-width="2.05" fill="none"/>
<path d="M1478 391.6 L1486.3 400 L1494.6 391.6" stroke="#505050" stroke-width="1.45" fill="none" />
<path d="M2362.75 410.14 H2357.3 A4.15 4.15 0 0 0 2353.16 414.3 V425.65 A4.15 4.15 0 0 0 2357.3 429.8 H2368.85 A4.15 4.15 0 0 0 2373 425.65 V422" stroke="#242424" stroke-width="1.9" fill="none" stroke-linecap="round"/>
<path d="M2355.92 413.22 H2366.65 M2362.1 419.24 H2369.9 M2362.1 425.2 H2369.9" stroke="#242424" stroke-width="1.5" fill="none" stroke-linecap="round"/>
<circle cx="2357.71" cy="419.24" r="1.6" stroke="#242424" stroke-width="1.3" fill="none"/>
<circle cx="2357.71" cy="425.15" r="1.6" stroke="#242424" stroke-width="1.3" fill="none"/>
<path d="M2369.41 405.2 Q2370.2259999999997 409.48400000000004 2374.5099999999998 410.3 Q2370.2259999999997 411.116 2369.41 415.40000000000003 Q2368.594 411.116 2364.31 410.3 Q2368.594 409.48400000000004 2369.41 405.2Z" fill="#242424"/>
<path d="M2374.29 414.01 Q2374.866 417.034 2377.89 417.61 Q2374.866 418.18600000000004 2374.29 421.21000000000004 Q2373.714 418.18600000000004 2370.69 417.61 Q2373.714 417.034 2374.29 414.01Z" fill="#242424"/>
<path d="M1340.4 825 L1349.4 834.4 L1358.4 825" stroke="#565656" stroke-width="1.5" fill="none" />
<path d="M1340.4 897 L1349.4 906.4 L1358.4 897" stroke="#565656" stroke-width="1.5" fill="none" />
<path d="M601.7 819.5 H607.7 M604.7 816.5 V822.5" stroke="#2b6cb8" stroke-width="1.1" fill="none" />
<path d="M601.7 891.7 H607.7 M604.7 888.7 V894.7" stroke="#2b6cb8" stroke-width="1.1" fill="none" />
<rect x="594" y="964.3" width="12.2" height="10.5" rx="1.6" stroke="#3d3d3d" stroke-width="1.4" fill="none"/>
<path d="M596.9 964.3 V962.9 A3.2 3.2 0 0 1 603.3 962.9 V964.3" stroke="#3d3d3d" stroke-width="1.4" fill="none" />
<circle cx="600" cy="969.5" r="1.1" stroke="none" stroke-width="0" fill="#3d3d3d"/>
<rect x="594" y="1036.4" width="12.2" height="10.5" rx="1.6" stroke="#3d3d3d" stroke-width="1.4" fill="none"/>
<path d="M596.9 1036.4 V1035.0 A3.2 3.2 0 0 1 603.3 1035.0 V1036.4" stroke="#3d3d3d" stroke-width="1.4" fill="none" />
<circle cx="600" cy="1041.6" r="1.1" stroke="none" stroke-width="0" fill="#3d3d3d"/></svg>
<span class="t" style="left:1901.23px;top:33.77px;font-size:65.6px;color:#fff;transform-origin:0 0;transform:scaleX(0.6174);-webkit-text-stroke:1.1px #6c2f73">S</span><span class="t" style="left:1930.60px;top:33.77px;font-size:65.6px;color:#fff;transform-origin:0 0;transform:scaleX(0.8227);-webkit-text-stroke:1.7px #6c2f73">A</span><span class="t" style="left:1967.83px;top:33.77px;font-size:65.6px;color:#fff;transform-origin:0 0;transform:scaleX(0.8757);-webkit-text-stroke:1.8px #6c2f73">N</span><span class="t" style="left:2011.22px;top:33.77px;font-size:65.6px;color:#fff;transform-origin:0 0;transform:scaleX(0.8272);-webkit-text-stroke:1.8px #6c2f73">D</span><span class="t" style="left:2053.00px;top:33.77px;font-size:65.6px;color:#fff;transform-origin:0 0;transform:scaleX(0.6369);-webkit-text-stroke:1.3px #6c2f73">B</span><span class="t" style="left:2081.93px;top:33.77px;font-size:65.6px;color:#fff;transform-origin:0 0;transform:scaleX(0.9536);-webkit-text-stroke:1.9px #6c2f73">O</span><span class="t" style="left:2128.04px;top:33.77px;font-size:65.6px;color:#fff;transform-origin:0 0;transform:scaleX(0.7370);-webkit-text-stroke:1.7px #6c2f73">X</span>
<span class="t" style="left:76.50px;top:33.83px;font-size:23px;color:#ffffff;letter-spacing:-0.325px;font-weight:700;-webkit-text-stroke:0.22px #6c2f73">Power Apps</span>
<span class="t" style="left:255.30px;top:34.52px;font-size:21px;color:#ffffff;letter-spacing:-0.373px">Risk Hub</span>
<span class="t" style="left:822.50px;top:33.65px;font-size:20.5px;color:#424242;letter-spacing:-0.810px">Search</span>
<span class="t" style="left:59.80px;top:158.97px;font-size:20px;color:#242424;letter-spacing:0.758px">Home</span>
<span class="t" style="left:59.80px;top:211.87px;font-size:20px;color:#242424;letter-spacing:-0.322px">Recent</span>
<span class="t" style="left:59.80px;top:263.87px;font-size:20px;color:#242424;letter-spacing:0.350px">Pinned</span>
<span class="t" style="left:14.00px;top:322.12px;font-size:21px;color:#242424;letter-spacing:-0.965px;font-weight:700;-webkit-text-stroke:0.34px #f0f0f0">Dashboards</span>
<span class="t" style="left:59.80px;top:380.87px;font-size:20px;color:#242424;letter-spacing:0.162px">Dashboards</span>
<span class="t" style="left:13.60px;top:460.62px;font-size:21px;color:#242424;letter-spacing:-0.497px;font-weight:700;-webkit-text-stroke:0.34px #f0f0f0">Risk Management</span>
<span class="t" style="left:59.80px;top:518.97px;font-size:20px;color:#242424;letter-spacing:-0.897px">Risks</span>
<span class="t" style="left:59.80px;top:571.77px;font-size:20px;color:#242424;letter-spacing:-0.429px">Risk Reviews</span>
<span class="t" style="left:59.20px;top:624.07px;font-size:20px;color:#242424;letter-spacing:0.151px">Compliance Registers</span>
<span class="t" style="left:59.80px;top:676.47px;font-size:20px;color:#242424;letter-spacing:0.344px">Incidents</span>
<span class="t" style="left:14.00px;top:755.22px;font-size:21px;color:#242424;letter-spacing:-0.671px;font-weight:700;-webkit-text-stroke:0.34px #f0f0f0">Individuals</span>
<span class="t" style="left:60.80px;top:814.77px;font-size:20px;color:#242424;letter-spacing:0.133px">Accounts</span>
<span class="t" style="left:59.40px;top:867.07px;font-size:20px;color:#242424;letter-spacing:0.182px">Contacts</span>
<span class="t" style="left:566.20px;top:114.80px;font-size:20.5px;color:#242424;letter-spacing:-1.575px">Save</span>
<span class="t" style="left:679.70px;top:114.80px;font-size:20.5px;color:#242424;letter-spacing:-0.318px">Save &amp; Close</span>
<span class="t" style="left:871.40px;top:114.80px;font-size:20.5px;color:#242424;letter-spacing:-0.153px">New</span>
<span class="t" style="left:983.00px;top:114.80px;font-size:20.5px;color:#242424;letter-spacing:0.050px">Deactivate</span>
<span class="t" style="left:1150.90px;top:114.80px;font-size:20.5px;color:#242424;letter-spacing:0.109px">Delete</span>
<span class="t" style="left:1281.30px;top:114.80px;font-size:20.5px;color:#242424;letter-spacing:-0.596px">Refresh</span>
<span class="t" style="left:1419.60px;top:114.80px;font-size:20.5px;color:#242424;letter-spacing:-0.539px">Check Access</span>
<span class="t" style="left:1614.80px;top:114.80px;font-size:20.5px;color:#242424;letter-spacing:-0.917px">Process</span>
<span class="t" style="left:1797.00px;top:114.80px;font-size:20.5px;color:#242424;letter-spacing:-0.286px">Assign</span>
<span class="t" style="left:1928.70px;top:114.80px;font-size:20.5px;color:#242424;letter-spacing:0.032px">Word Templates</span>
<span class="t" style="left:2415.00px;top:114.74px;font-size:17.5px;color:#424242;letter-spacing:-0.716px">Share</span>
<span class="t" style="left:348.00px;top:216.05px;font-size:29px;color:#242424;letter-spacing:0.217px;font-weight:700;-webkit-text-stroke:0.34px #fff">Data Deletion</span>
<span class="t" style="left:545.30px;top:219.00px;font-size:20.5px;color:#616161;letter-spacing:-0.508px">- Saved</span>
<span class="t" style="left:348.00px;top:253.57px;font-size:20px;color:#424242;letter-spacing:-0.696px;-webkit-text-stroke:0.35px #424242">Risk</span>
<span class="t" style="left:1874.10px;top:215.75px;font-size:21.5px;color:#2564b0;letter-spacing:-0.975px;font-weight:700;-webkit-text-stroke:0.34px #fff">Adam Bryant</span>
<span class="t" style="left:1874.10px;top:242.06px;font-size:18px;color:#424242;letter-spacing:-0.530px">Owner</span>
<span class="t" style="left:2036.50px;top:215.75px;font-size:21.5px;color:#242424;letter-spacing:-1.375px;font-weight:700;-webkit-text-stroke:0.34px #fff">Active</span>
<span class="t" style="left:2036.50px;top:242.06px;font-size:18px;color:#424242;letter-spacing:-0.846px">Status</span>
<span class="t" style="left:2132.70px;top:215.75px;font-size:21.5px;color:#242424;letter-spacing:-1.375px;font-weight:700;-webkit-text-stroke:0.34px #fff">Active</span>
<span class="t" style="left:2132.70px;top:242.06px;font-size:18px;color:#424242;letter-spacing:-1.032px">Stage</span>
<span class="t" style="left:2228.90px;top:215.75px;font-size:21.5px;color:#242424;letter-spacing:-0.410px;font-weight:700;-webkit-text-stroke:0.34px #fff">6/11/2025 9:08 AM</span>
<span class="t" style="left:2228.90px;top:242.06px;font-size:18px;color:#424242;letter-spacing:-0.271px">Created On</span>
<span class="t" style="left:339.00px;top:308.17px;font-size:20px;color:#ffffff;letter-spacing:-0.479px;font-weight:700;-webkit-text-stroke:0.1px #2a6cb8">Risk Register</span>
<span class="t" style="left:340.00px;top:331.96px;font-size:18px;color:#ffffff;letter-spacing:0.005px">Completed in 5 hours</span>
<span class="t" style="left:833.40px;top:331.80px;font-size:20.5px;color:#333333;letter-spacing:0.508px">Identification</span>
<span class="t" style="left:1313.00px;top:331.80px;font-size:20.5px;color:#333333;letter-spacing:-0.298px">Analysis</span>
<span class="t" style="left:1744.70px;top:331.80px;font-size:20.5px;color:#333333;letter-spacing:0.030px">Evaluation</span>
<span class="t" style="left:2199.60px;top:331.80px;font-size:20.5px;color:#242424;letter-spacing:-0.369px;font-weight:700;-webkit-text-stroke:0.34px #f0f0f0">Treatment</span>
<span class="t" style="left:348.20px;top:397.88px;font-size:24px;color:#242424;letter-spacing:0.389px;-webkit-text-stroke:0.22px #fff">Identify</span>
<span class="t" style="left:464.30px;top:397.88px;font-size:24px;color:#242424;letter-spacing:-1.624px;font-weight:700;-webkit-text-stroke:0.34px #fff">Analysis</span>
<span class="t" style="left:582.40px;top:397.88px;font-size:24px;color:#242424;letter-spacing:-0.893px;-webkit-text-stroke:0.22px #fff">Evaluate</span>
<span class="t" style="left:703.30px;top:397.88px;font-size:24px;color:#242424;letter-spacing:-0.452px;-webkit-text-stroke:0.22px #fff">Treatment</span>
<span class="t" style="left:842.10px;top:397.88px;font-size:24px;color:#242424;letter-spacing:-0.343px;-webkit-text-stroke:0.22px #fff">Compliances</span>
<span class="t" style="left:1011.50px;top:397.88px;font-size:24px;color:#242424;letter-spacing:-1.349px;-webkit-text-stroke:0.22px #fff">Reviews</span>
<span class="t" style="left:1127.30px;top:397.88px;font-size:24px;color:#242424;letter-spacing:-0.057px;-webkit-text-stroke:0.22px #fff">Incidents</span>
<span class="t" style="left:1257.50px;top:397.88px;font-size:24px;color:#242424;letter-spacing:-0.154px;-webkit-text-stroke:0.22px #fff">Activities</span>
<span class="t" style="left:1385.80px;top:397.88px;font-size:24px;color:#242424;letter-spacing:-0.646px;-webkit-text-stroke:0.22px #fff">Related</span>
<span class="t" style="left:2387.20px;top:421.67px;font-size:20.3px;color:#242424;letter-spacing:-0.889px;font-weight:700;-webkit-text-stroke:0.34px #fafafa">Form assist</span>
<span class="t" style="left:342.30px;top:536.67px;font-size:20px;color:#424242;letter-spacing:0.228px">Existing Controls</span>
<span class="t" style="left:637.00px;top:544.17px;font-size:20px;color:#242424;letter-spacing:0.304px">Security-based access roles to provide access to only what is needed for a given user.</span>
<span class="t" style="left:341.50px;top:741.57px;font-size:20px;color:#242424;letter-spacing:0.132px;font-weight:700;-webkit-text-stroke:0.34px #fff">Risk Matrix - Inherent</span>
<span class="t" style="left:342.00px;top:825.87px;font-size:20.3px;color:#424242;letter-spacing:0.516px">Likelihood</span>
<span class="t" style="left:636.20px;top:830.97px;font-size:20px;color:#242424;letter-spacing:0.540px">Unlikely</span>
<span class="t" style="left:342.80px;top:897.67px;font-size:20.3px;color:#424242;letter-spacing:-0.303px">Severity</span>
<span class="t" style="left:636.20px;top:902.77px;font-size:20px;color:#242424;letter-spacing:0.904px">Moderate</span>
<span class="t" style="left:342.80px;top:969.47px;font-size:20.3px;color:#424242;letter-spacing:-0.675px">Score</span>
<span class="t" style="left:636.20px;top:975.37px;font-size:20px;color:#242424;letter-spacing:-0.240px">2.7</span>
<span class="t" style="left:342.00px;top:1041.27px;font-size:20.3px;color:#424242;letter-spacing:0.291px">Rating</span>
<span class="t" style="left:636.20px;top:1047.27px;font-size:20px;color:#242424;letter-spacing:1.345px">Medium</span>
<span class="t" style="left:1636.20px;top:821.74px;font-size:12px;color:#1c1c1c;letter-spacing:-0.597px;font-weight:700">Likelihood</span>
<span class="t" style="left:1820.20px;top:821.74px;font-size:12px;color:#1c1c1c;letter-spacing:-0.531px;font-weight:700">Insignificant</span>
<span class="t" style="left:1912.40px;top:821.74px;font-size:12px;color:#1c1c1c;letter-spacing:-0.223px;font-weight:700">Minor</span>
<span class="t" style="left:2004.30px;top:821.74px;font-size:12px;color:#1c1c1c;letter-spacing:-0.210px;font-weight:700">Moderate</span>
<span class="t" style="left:2096.40px;top:821.74px;font-size:12px;color:#1c1c1c;letter-spacing:-0.258px;font-weight:700">Major</span>
<span class="t" style="left:2188.30px;top:821.74px;font-size:12px;color:#1c1c1c;letter-spacing:-0.839px;font-weight:700">Severe</span>
<span class="t" style="left:1820.20px;top:841.04px;font-size:12px;color:#1c1c1c;letter-spacing:0.083px">Medium</span>
<span class="t" style="left:1912.40px;top:841.04px;font-size:12px;color:#1c1c1c;letter-spacing:-0.335px">High</span>
<span class="t" style="left:2004.30px;top:841.04px;font-size:12px;color:#1c1c1c;letter-spacing:-0.335px">High</span>
<span class="t" style="left:2096.40px;top:841.04px;font-size:12px;color:#1c1c1c;letter-spacing:-0.417px">Extreme</span>
<span class="t" style="left:2188.30px;top:841.04px;font-size:12px;color:#1c1c1c;letter-spacing:-0.417px">Extreme</span>
<span class="t" style="left:1820.20px;top:895.94px;font-size:12px;color:#1c1c1c;letter-spacing:0.083px">Medium</span>
<span class="t" style="left:1912.40px;top:895.94px;font-size:12px;color:#1c1c1c;letter-spacing:0.083px">Medium</span>
<span class="t" style="left:2004.30px;top:895.94px;font-size:12px;color:#1c1c1c;letter-spacing:-0.335px">High</span>
<span class="t" style="left:2096.40px;top:895.94px;font-size:12px;color:#1c1c1c;letter-spacing:-0.417px">Extreme</span>
<span class="t" style="left:2188.30px;top:895.94px;font-size:12px;color:#1c1c1c;letter-spacing:-0.417px">Extreme</span>
<span class="t" style="left:1820.20px;top:951.14px;font-size:12px;color:#1c1c1c;letter-spacing:-0.724px">Low</span>
<span class="t" style="left:1912.40px;top:951.14px;font-size:12px;color:#1c1c1c;letter-spacing:0.083px">Medium</span>
<span class="t" style="left:2004.30px;top:951.14px;font-size:12px;color:#1c1c1c;letter-spacing:0.083px">Medium</span>
<span class="t" style="left:2096.40px;top:951.14px;font-size:12px;color:#1c1c1c;letter-spacing:-0.335px">High</span>
<span class="t" style="left:2188.30px;top:951.14px;font-size:12px;color:#1c1c1c;letter-spacing:-0.417px">Extreme</span>
<span class="t" style="left:1820.20px;top:1006.04px;font-size:12px;color:#1c1c1c;letter-spacing:-0.724px">Low</span>
<span class="t" style="left:1912.40px;top:1006.04px;font-size:12px;color:#1c1c1c;letter-spacing:0.083px">Medium</span>
<span class="t" style="left:2004.30px;top:1006.04px;font-size:12px;color:#1c1c1c;letter-spacing:0.083px">Medium</span>
<span class="t" style="left:2096.40px;top:1006.04px;font-size:12px;color:#1c1c1c;letter-spacing:-0.335px">High</span>
<span class="t" style="left:2188.30px;top:1006.04px;font-size:12px;color:#1c1c1c;letter-spacing:-0.335px">High</span>
<span class="t" style="left:1820.20px;top:1061.04px;font-size:12px;color:#1c1c1c;letter-spacing:-0.724px">Low</span>
<span class="t" style="left:1912.40px;top:1061.04px;font-size:12px;color:#1c1c1c;letter-spacing:-0.724px">Low</span>
<span class="t" style="left:2004.30px;top:1061.04px;font-size:12px;color:#1c1c1c;letter-spacing:0.083px">Medium</span>
<span class="t" style="left:2096.40px;top:1061.04px;font-size:12px;color:#1c1c1c;letter-spacing:0.083px">Medium</span>
<span class="t" style="left:2188.30px;top:1061.04px;font-size:12px;color:#1c1c1c;letter-spacing:-0.335px">High</span>
<span class="t" style="left:1429.10px;top:1161.26px;font-size:18px;color:#1c1c1c;letter-spacing:0.232px;font-weight:700;-webkit-text-stroke:0px #e6e6e6">Weighted Score</span>
<span class="t" style="left:1963.60px;top:1161.26px;font-size:18px;color:#1c1c1c;letter-spacing:-0.142px;font-weight:700;-webkit-text-stroke:0px #fff">Risk Rating</span>
<span class="t" style="left:1429.10px;top:1188.86px;font-size:18px;color:#1c1c1c;letter-spacing:0.419px">4.0 – 5.0</span>
<span class="t" style="left:1963.80px;top:1188.86px;font-size:18px;color:#1c1c1c;letter-spacing:0.699px">Extreme</span>
<span class="t" style="left:1429.10px;top:1215.66px;font-size:18px;color:#1c1c1c;letter-spacing:0.419px">3.0 – 3.9</span>
<span class="t" style="left:1963.80px;top:1215.76px;font-size:18px;color:#1c1c1c;letter-spacing:0.830px">High</span>
<span class="t" style="left:1429.10px;top:1243.36px;font-size:18px;color:#1c1c1c;letter-spacing:0.419px">2.0 – 2.9</span>
<span class="t" style="left:1963.90px;top:1243.46px;font-size:18px;color:#1c1c1c;letter-spacing:1.635px">Medium</span>
<span class="t" style="left:1428.10px;top:1270.56px;font-size:18px;color:#1c1c1c;letter-spacing:0.544px">1.0 – 1.9</span>
<span class="t" style="left:1963.90px;top:1270.86px;font-size:18px;color:#1c1c1c;letter-spacing:0.139px">Low</span>
<span class="t" style="left:1635.60px;top:840.84px;font-size:12px;color:#1c1c1c;letter-spacing:-0.817px;text-decoration:underline;text-decoration-thickness:1px;text-underline-offset:0.5px"><b>ALMOST CERTAIN</b></span>
<span class="t" style="left:1635.60px;top:859.04px;font-size:12px;color:#1c1c1c;letter-spacing:-0.241px">This event <b>is expected</b> to occur</span>
<span class="t" style="left:1635.60px;top:876.74px;font-size:12px;color:#1c1c1c;letter-spacing:-0.198px">in <b>most</b> circumstances</span>
<span class="t" style="left:1635.60px;top:895.74px;font-size:12px;color:#1c1c1c;letter-spacing:-1.161px;text-decoration:underline;text-decoration-thickness:1px;text-underline-offset:0.5px"><b>LIKELY</b></span>
<span class="t" style="left:1635.60px;top:913.94px;font-size:12px;color:#1c1c1c;letter-spacing:-0.239px">The event will <b>probably occur</b> in</span>
<span class="t" style="left:1635.60px;top:931.64px;font-size:12px;color:#1c1c1c;letter-spacing:-0.238px"><b>most</b> circumstances</span>
<span class="t" style="left:1635.60px;top:950.94px;font-size:12px;color:#1c1c1c;letter-spacing:-1.097px;text-decoration:underline;text-decoration-thickness:1px;text-underline-offset:0.5px"><b>OCCASSIONAL</b></span>
<span class="t" style="left:1635.60px;top:969.14px;font-size:12px;color:#1c1c1c;letter-spacing:-0.205px">The event <b>will</b> occur at <b>some</b></span>
<span class="t" style="left:1635.60px;top:986.84px;font-size:12px;color:#1c1c1c;letter-spacing:0.032px"><b>time</b></span>
<span class="t" style="left:1635.60px;top:1005.84px;font-size:12px;color:#1c1c1c;letter-spacing:-0.862px;text-decoration:underline;text-decoration-thickness:1px;text-underline-offset:0.5px"><b>UNLIKELY</b></span>
<span class="t" style="left:1635.60px;top:1024.04px;font-size:12px;color:#1c1c1c;letter-spacing:-0.272px">The event <b>could</b> occur at <b>some</b></span>
<span class="t" style="left:1635.60px;top:1041.74px;font-size:12px;color:#1c1c1c;letter-spacing:0.032px"><b>time</b></span>
<span class="t" style="left:1635.60px;top:1060.84px;font-size:12px;color:#1c1c1c;letter-spacing:-1.275px;text-decoration:underline;text-decoration-thickness:1px;text-underline-offset:0.5px"><b>RARE</b></span>
<span class="t" style="left:1635.60px;top:1079.04px;font-size:12px;color:#1c1c1c;letter-spacing:-0.134px">The event <b>may</b> occur only in</span>
<span class="t" style="left:1635.60px;top:1096.74px;font-size:12px;color:#1c1c1c;letter-spacing:-0.512px"><b>exceptional circumstances</b></span>
<div class="a" style="left:439.1px;top:367.9px;width:144px;height:97.1px;border:8px solid #ff2600"></div>
<div class="a" style="left:296px;top:708.1px;width:321.1px;height:71.5px;border:7.8px solid #ff2600;border-radius:50%"></div>
<div class="a" style="left:1389.1px;top:790.9px;width:1112.8px;height:521.9px;border:7.85px solid #ff2600"></div>
</div></body></html>
